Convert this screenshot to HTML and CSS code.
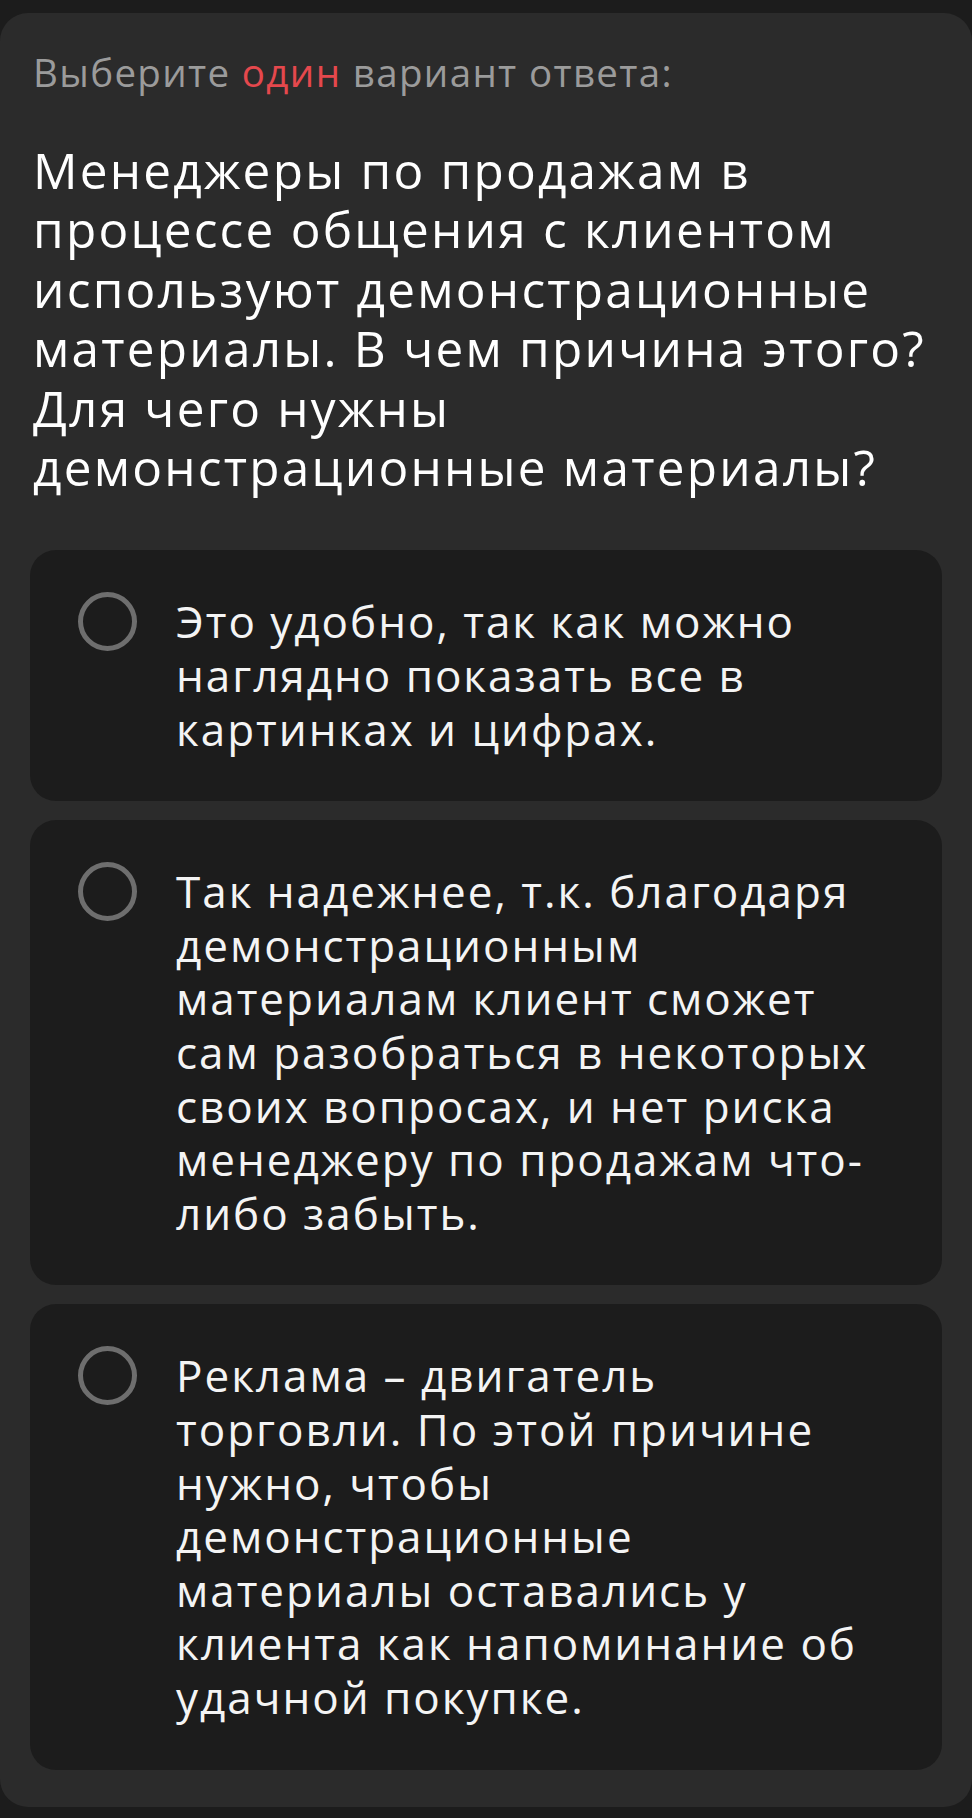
FILE: index.html
```html
<!DOCTYPE html>
<html lang="ru">
<head>
  <meta charset="UTF-8">
  <title>Тест</title>
  <link rel="stylesheet" href="styles.css">
</head>
<body>
<div class="quiz">
  <div class="hint">Выберите <span class="accent">один</span> вариант ответа:</div>
  <div class="question">Менеджеры по продажам в процессе общения с клиентом используют демонстрационные материалы. В чем причина этого? Для чего нужны демонстрационные материалы?</div>
  <ul class="answers">
    <li class="answer"><span class="radio"></span><span class="answer-text">Это удобно, так как можно наглядно показать все в картинках и цифрах.</span></li>
    <li class="answer"><span class="radio"></span><span class="answer-text">Так надежнее, т.к. благодаря демонстрационным материалам клиент сможет сам разобраться в некоторых своих вопросах, и нет риска менеджеру по продажам что-либо забыть.</span></li>
    <li class="answer"><span class="radio"></span><span class="answer-text">Реклама – двигатель торговли. По этой причине нужно, чтобы демонстрационные материалы оставались у клиента как напоминание об удачной покупке.</span></li>
  </ul>
</div>
</body>
</html>
```

FILE: styles.css
```css
body,div,ul,li{margin:0;padding:0;}
ul{list-style-type:none;}
body{background:#1c1c1c;font-family:"Open Sans","Noto Sans",sans-serif;color:#fff;padding:13px 0 12px;}

.quiz{background:#2b2b2b;border-radius:28px;padding:36px 30px 37px;}
.hint{font-size:38.5px;line-height:46px;color:#9b9b9b;padding:0 3px;letter-spacing:0.035em;}
.hint .accent{color:#e5484d;}
.question{font-size:49.5px;line-height:59.4px;color:#fff;padding:0 3px;margin-top:46px;letter-spacing:0.045em;}

.answers{margin-top:53px;display:flex;flex-direction:column;gap:19px;}
.answer{display:flex;align-items:flex-start;gap:39px;background:#1c1c1c;border-radius:26px;padding:45px 58px 45px 48px;}
.radio{flex-shrink:0;box-sizing:border-box;width:59px;height:59px;border:5px solid #6e6e6e;border-radius:50%;margin-top:-3px;}
.answer-text{font-size:44px;line-height:53.6px;color:#f4f4f4;letter-spacing:0.045em;}
```
